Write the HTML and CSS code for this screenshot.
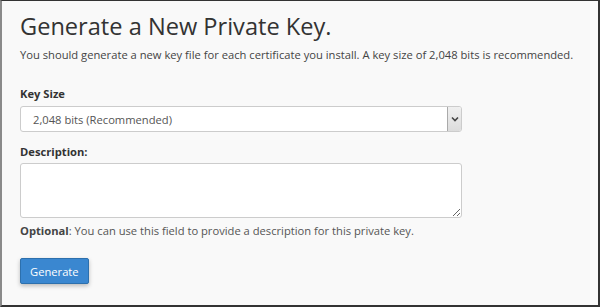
FILE: index.html
```html
<!DOCTYPE html>
<html lang="en">

<head>
    <meta charset="UTF-8">
    <title>Generate a New Private Key</title>
    <link rel="stylesheet" href="styles.css">
</head>

<body>

    <main class="panel">
        <h1>Generate a New Private Key.</h1>
        <p class="intro">You should generate a new key file for each certificate you install. A key size of 2,048 bits is recommended.</p>

        <form>
            <label class="felt-label forste" for="keysize">Key Size</label>
            <div class="valg">
                <select id="keysize">
                    <option>2,048 bits (Recommended)</option>
                    <option>4,096 bits</option>
                </select>
                <span class="pil">
                    <svg width="8" height="6" viewBox="0 0 8 6">
                        <path d="M1 1.5 L4 4.5 L7 1.5" fill="none" stroke="#444" stroke-width="1.6"/>
                    </svg>
                </span>
            </div>

            <label class="felt-label" for="beskrivelse">Description:</label>
            <textarea id="beskrivelse"></textarea>
            <p class="hjaelp"><strong>Optional</strong>: You can use this field to provide a description for this private key.</p>

            <button type="button" class="knap">Generate</button>
        </form>
    </main>

</body>

</html>
```

FILE: styles.css
```css
html,
body {
    margin: 0;
    height: 100%;
}

body {
    font-family: "Open Sans", sans-serif;
    color: #333;
}

.panel {
    box-sizing: border-box;
    height: 307px;
    background: #f9f9f9;
    border-top: 1px solid #333;
    border-left: 2px solid #8a8a8a;
    border-right: 2px solid #333;
    border-bottom: 2px solid #333;
    padding: 8px 18px 0;
}

h1 {
    font-size: 23.6px;
    font-weight: normal;
    margin: 0;
    line-height: 34px;
}

.intro {
    font-size: 11.2px;
    margin: 4px 0 0;
    line-height: 16px;
    color: #444;
}

.felt-label {
    display: block;
    font-size: 11.2px;
    font-weight: bold;
    line-height: 16px;
    margin-top: 12px;
}

.felt-label.forste {
    margin-top: 23px;
}

.valg {
    display: flex;
    width: 442px;
    height: 26px;
    box-sizing: border-box;
    margin-top: 4px;
    background: #fff;
    border: 1px solid #ccc;
    border-radius: 3px;
}

.valg select {
    flex: 1;
    appearance: none;
    border: none;
    background: transparent;
    font-family: "Open Sans", sans-serif;
    font-size: 11.2px;
    color: #555;
    padding: 0 12px;
    outline: none;
}

.pil {
    width: 13px;
    display: flex;
    align-items: center;
    justify-content: center;
    background: linear-gradient(#f0f0f0, #dcdcdc);
    border-left: 1px solid #aaa;
    border-radius: 0 2px 2px 0;
}

textarea {
    display: block;
    width: 442px;
    height: 55px;
    box-sizing: border-box;
    margin-top: 3px;
    border: 1px solid #ccc;
    border-radius: 3px;
    background: #fff;
}

.hjaelp {
    font-size: 11.2px;
    color: #555;
    margin: 5px 0 0;
    line-height: 16px;
}

.hjaelp strong {
    color: #444;
}

.knap {
    display: block;
    margin-top: 19px;
    background: #3a87d0;
    color: #fff;
    border: 1px solid #2d70ad;
    border-radius: 2px;
    font-family: "Open Sans", sans-serif;
    font-size: 11.2px;
    height: 26px;
    padding: 0 9px;
    box-shadow: 0 2px 4px rgba(0, 0, 0, 0.25);
}
```
